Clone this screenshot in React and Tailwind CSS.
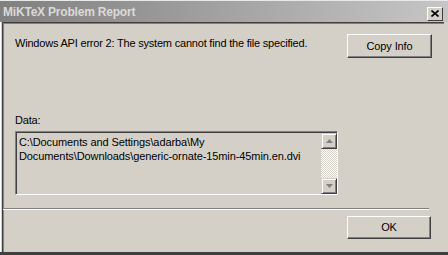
import React from 'react';

const btn =
  'flex items-center justify-center bg-[#d4d0c8] border border-t-white border-l-white border-r-[#404040] border-b-[#404040] shadow-[inset_-1px_-1px_0_#808080] text-[11px] tracking-[-0.1px] text-black';

const ScrollArrow = ({ down }) => (
  <div className="w-[16px] h-[16px] flex items-center justify-center bg-[#d4d0c8] border border-t-[#d4d0c8] border-l-[#d4d0c8] border-r-[#404040] border-b-[#404040] shadow-[inset_1px_1px_0_#ffffff,inset_-1px_-1px_0_#808080]">
    <svg width="7" height="4" viewBox="0 0 7 4">
      {down ? <polygon points="0,0 7,0 3.5,4" fill="#808080" /> : <polygon points="0,4 7,4 3.5,0" fill="#808080" />}
    </svg>
  </div>
);

const App = () => {
  return (
    <div
      className="w-[448px] h-[255px] bg-[#d4d0c8] flex flex-col overflow-hidden border-b-[3px] border-b-[#404040] shadow-[inset_1px_0_0_#ffffff]"
      style={{ fontFamily: '"Liberation Sans", Arial, sans-serif' }}
    >
      {/* title bar */}
      <div className="h-[22px] shrink-0 flex items-center justify-between pl-[3px] pr-[5px] bg-gradient-to-r from-[#808080] to-[#c6c6c6] border-t border-t-[#e8e8e8]">
        <span className="text-[12px] font-bold text-[#dcdad5] tracking-[-0.2px]">MiKTeX Problem Report</span>
        <div className="w-[16px] h-[14px] mt-[4px] flex items-center justify-center bg-[#d4d0c8] border border-t-white border-l-white border-r-[#404040] border-b-[#404040]">
          <svg width="8" height="7" viewBox="0 0 8 7">
            <path d="M0.5 0.5 L7.5 6.5 M7.5 0.5 L0.5 6.5" stroke="#000" strokeWidth="1.6" />
          </svg>
        </div>
      </div>

      {/* client */}
      <div className="flex-1 flex flex-col ml-[2px] mr-[4px] border-t border-l border-t-[#404040] border-l-[#404040] shadow-[inset_1px_1px_0_#808080]">
        <div className="flex justify-between items-start pl-[12px] pt-[11px]">
          <div className="text-[11px] leading-[14px] mt-[2px] tracking-[-0.2px] text-black">
            Windows API error 2: The system cannot find the file specified.
          </div>
          <div className={`${btn} w-[85px] h-[24px] mr-[12px]`}>Copy Info</div>
        </div>

        <div className="pl-[12px] mt-[55px] text-[11px] leading-[14px] tracking-[-0.2px] text-black">Data:</div>

        <div className="ml-[12px] mt-[4px] w-[323px] h-[64px] flex border border-t-[#808080] border-l-[#808080] border-r-white border-b-white shadow-[inset_1px_1px_0_#404040]">
          <div className="flex-1 pl-[3px] pt-[3px] text-[11px] leading-[14px] tracking-[-0.1px] text-black">
            C:\Documents and Settings\adarba\My
            <br />
            Documents\Downloads\generic-ornate-15min-45min.en.dvi
          </div>
          <div className="w-[16px] mt-[1px] flex flex-col">
            <ScrollArrow />
            <div className="flex-1 bg-[repeating-conic-gradient(#ffffff_0_25%,#d4d0c8_0_50%)] bg-size-[2px_2px]" />
            <ScrollArrow down />
          </div>
        </div>

        <div className="mt-[13px] mr-[15px] h-[2px] border-t border-t-[#808080] border-b border-b-white" />

        <div className="flex justify-end mt-[6px]">
          <div className={`${btn} w-[84px] h-[23px] mr-[13px]`}>OK</div>
        </div>
      </div>
    </div>
  );
};

export default App;
